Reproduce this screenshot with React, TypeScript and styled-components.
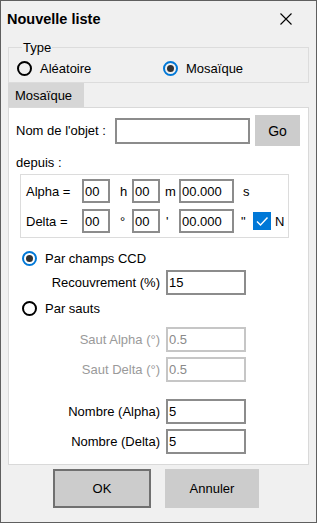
import React from 'react'
import styled, { createGlobalStyle } from 'styled-components'

const GlobalStyle = createGlobalStyle`
  body {
    margin: 0;
    background: #ffffff;
    font-family: 'Liberation Sans', Arial, sans-serif;
    font-size: 13px;
    color: #000;
  }
`

const Window = styled.div`
  width: 317px;
  height: 523px;
  box-sizing: border-box;
  border: 1px solid #5f5f5f;
  background: #f0f0f0;
  display: flex;
  flex-direction: column;
`

const TitleBar = styled.div`
  height: 36px;
  flex: none;
  display: flex;
  align-items: center;
  justify-content: space-between;
  padding-left: 6px;
`

const Title = styled.span`
  font-weight: bold;
  font-size: 14.5px;
`

const CloseIcon = styled.svg`
  width: 12px;
  height: 12px;
  margin-right: 24px;
`

const Body = styled.div`
  padding: 0 7px;
  display: flex;
  flex-direction: column;
`

const GroupBox = styled.fieldset`
  margin: 3px 0 0;
  height: 43px;
  box-sizing: border-box;
  padding: 0 8px;
  border: 1px solid #dcdcdc;
  min-width: 0;
`

const Legend = styled.legend`
  margin-left: 5px;
  padding: 0 1px;
  line-height: 15px;
`

const RadioRow = styled.div<{ $top?: number; $indent?: number }>`
  display: flex;
  align-items: center;
  height: 20px;
  margin-top: ${(p) => p.$top ?? 0}px;
  margin-left: ${(p) => p.$indent ?? 0}px;
`

const RadioItem = styled.label<{ $width?: number }>`
  display: flex;
  align-items: center;
  width: ${(p) => (p.$width ? `${p.$width}px` : 'auto')};
`

const RadioCircle = styled.span<{ $checked?: boolean }>`
  width: 15px;
  height: 15px;
  box-sizing: border-box;
  border-radius: 50%;
  border: 2px solid ${(p) => (p.$checked ? '#0078d7' : '#000')};
  margin-right: 8px;
  display: flex;
  align-items: center;
  justify-content: center;
  flex: none;
  &::after {
    content: '';
    display: ${(p) => (p.$checked ? 'block' : 'none')};
    width: 7px;
    height: 7px;
    border-radius: 50%;
    background: #333;
  }
`

const TabStrip = styled.div`
  display: flex;
`

const Tab = styled.div`
  width: 76px;
  height: 24px;
  box-sizing: border-box;
  background: #d6d6d6;
  padding-left: 7px;
  display: flex;
  align-items: center;
`

const Panel = styled.div`
  height: 358px;
  box-sizing: border-box;
  background: #ffffff;
  border: 1px solid #d9d9d9;
  padding: 0 7px;
  display: flex;
  flex-direction: column;
`

const FormRow = styled.div<{ $top?: number; $height?: number }>`
  display: flex;
  align-items: center;
  margin-top: ${(p) => p.$top ?? 0}px;
  height: ${(p) => p.$height ?? 25}px;
`

const Label = styled.span<{ $width?: number; $right?: boolean; $disabled?: boolean }>`
  width: ${(p) => (p.$width ? `${p.$width}px` : 'auto')};
  flex: none;
  box-sizing: border-box;
  text-align: ${(p) => (p.$right ? 'right' : 'left')};
  padding-right: ${(p) => (p.$right ? 6 : 0)}px;
  color: ${(p) => (p.$disabled ? '#9a9a9a' : '#000')};
  line-height: 15px;
`

const TextBox = styled.input<{ $width: number; $height?: number }>`
  width: ${(p) => p.$width}px;
  height: ${(p) => p.$height ?? 25}px;
  box-sizing: border-box;
  border: 2px solid #8c8c8c;
  background: #fff;
  padding: 0 0 0 1px;
  margin: 0;
  font-family: inherit;
  font-size: 13px;
  color: #000;
  outline: none;
  flex: none;
  &:disabled {
    border-color: #c6c6c6;
    color: #8a8a8a;
    background: #fff;
  }
`

const GoButton = styled.button`
  width: 45px;
  height: 31px;
  margin-left: 5px;
  border: none;
  background: #cccccc;
  font-family: inherit;
  font-size: 14px;
  color: #000;
  padding: 0;
`

const CoordBox = styled.div`
  margin: 4px 0 0 4px;
  width: 269px;
  box-sizing: border-box;
  border: 1px solid #dcdcdc;
  padding: 4px 0 4px 5px;
  display: flex;
  flex-direction: column;
  gap: 6px;
`

const Unit = styled.span<{ $width: number; $pad: number }>`
  width: ${(p) => p.$width}px;
  padding-left: ${(p) => p.$pad}px;
  box-sizing: border-box;
  flex: none;
`

const CheckBox = styled.span`
  width: 18px;
  height: 18px;
  background: #0078d7;
  display: flex;
  align-items: center;
  justify-content: center;
  flex: none;
  margin-right: 4px;
`

const ButtonRow = styled.div`
  display: flex;
  gap: 14px;
  margin: 4px 0 0 45px;
`

const DialogButton = styled.button<{ $default?: boolean; $width: number }>`
  width: ${(p) => p.$width}px;
  height: 39px;
  box-sizing: border-box;
  background: #cccccc;
  border: ${(p) => (p.$default ? '2px solid #707070' : 'none')};
  font-family: inherit;
  font-size: 13px;
  color: #000;
  padding: 0;
`

function Radio({ label, checked, width }: { label: string; checked?: boolean; width?: number }) {
  return (
    <RadioItem $width={width}>
      <RadioCircle $checked={checked} />
      {label}
    </RadioItem>
  )
}

function LabeledField({
  label,
  value,
  top,
  disabled,
}: {
  label: string
  value: string
  top: number
  disabled?: boolean
}) {
  return (
    <FormRow $top={top}>
      <Label $width={150} $right $disabled={disabled}>
        {label}
      </Label>
      <TextBox $width={80} defaultValue={value} disabled={disabled} />
    </FormRow>
  )
}

export default function App() {
  return (
    <>
      <GlobalStyle />
      <Window>
        <TitleBar>
          <Title>Nouvelle liste</Title>
          <CloseIcon viewBox='0 0 12 12'>
            <path d='M0.5 0.5 L11.5 11.5 M11.5 0.5 L0.5 11.5' stroke='#000' strokeWidth='1.1' fill='none' />
          </CloseIcon>
        </TitleBar>
        <Body>
          <GroupBox>
            <Legend>Type</Legend>
            <RadioRow $top={3}>
              <Radio label='Aléatoire' width={146} />
              <Radio label='Mosaïque' checked />
            </RadioRow>
          </GroupBox>
          <TabStrip>
            <Tab>Mosaïque</Tab>
          </TabStrip>
          <Panel>
            <FormRow $top={7} $height={31}>
              <Label $width={99}>Nom de l'objet :</Label>
              <TextBox $width={135} $height={26} />
              <GoButton>Go</GoButton>
            </FormRow>
            <FormRow $top={9} $height={15}>
              <Label>depuis :</Label>
            </FormRow>
            <CoordBox>
              <FormRow $height={24}>
                <Label $width={56}>Alpha =</Label>
                <TextBox $width={28} $height={24} defaultValue='00' />
                <Unit $width={22} $pad={10}>h</Unit>
                <TextBox $width={28} $height={24} defaultValue='00' />
                <Unit $width={19} $pad={5}>m</Unit>
                <TextBox $width={55} $height={24} defaultValue='00.000' />
                <Unit $width={19} $pad={9}>s</Unit>
              </FormRow>
              <FormRow $height={24}>
                <Label $width={56}>Delta =</Label>
                <TextBox $width={28} $height={24} defaultValue='00' />
                <Unit $width={22} $pad={10}>°</Unit>
                <TextBox $width={28} $height={24} defaultValue='00' />
                <Unit $width={19} $pad={6}>'</Unit>
                <TextBox $width={55} $height={24} defaultValue='00.000' />
                <Unit $width={19} $pad={7}>"</Unit>
                <CheckBox>
                  <svg width='14' height='14' viewBox='0 0 14 14'>
                    <path d='M2 7.5 L5.5 11 L12.5 3.5' stroke='#fff' strokeWidth='1.4' fill='none' />
                  </svg>
                </CheckBox>
                <span>N</span>
              </FormRow>
            </CoordBox>
            <RadioRow $top={10} $indent={6}>
              <Radio label='Par champs CCD' checked />
            </RadioRow>
            <LabeledField label='Recouvrement (%)' value='15' top={2} />
            <RadioRow $top={3} $indent={6}>
              <Radio label='Par sauts' />
            </RadioRow>
            <LabeledField label='Saut Alpha (°)' value='0.5' top={9} disabled />
            <LabeledField label='Saut Delta (°)' value='0.5' top={5} disabled />
            <LabeledField label='Nombre (Alpha)' value='5' top={17} />
            <LabeledField label='Nombre (Delta)' value='5' top={5} />
          </Panel>
          <ButtonRow>
            <DialogButton $default $width={98}>
              OK
            </DialogButton>
            <DialogButton $width={94}>Annuler</DialogButton>
          </ButtonRow>
        </Body>
      </Window>
    </>
  )
}
